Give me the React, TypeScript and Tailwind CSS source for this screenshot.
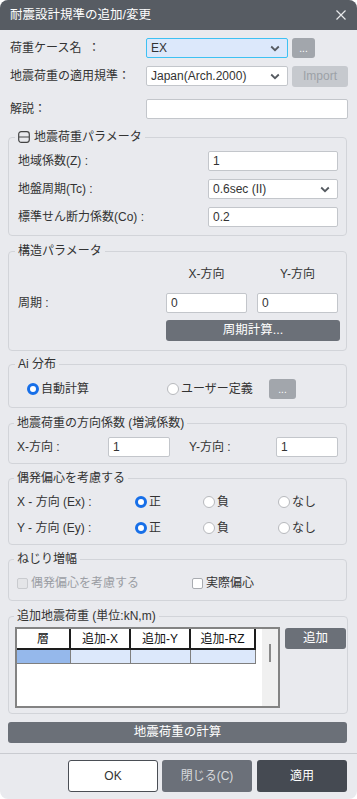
import React from "react";

function Chevron() {
  return (
    <svg width="10" height="7" viewBox="0 0 10 7" className="shrink-0">
      <path d="M1.2 1.5L5 5.2l3.8-3.7" fill="none" stroke="#555a60" strokeWidth="1.8" />
    </svg>
  );
}

function Select({ value, focus, className = "" }: { value: string; focus?: boolean; className?: string }) {
  return (
    <div
      className={`flex h-[20px] items-center justify-between rounded-[2px] border pl-[4px] pr-[7px] ${
        focus ? "border-[#3ec1f3] bg-[#dce8fb]" : "border-[#c3c6cb] bg-white"
      } ${className}`}
    >
      <span>{value}</span>
      <Chevron />
    </div>
  );
}

function Input({ value = "", className = "" }: { value?: string; className?: string }) {
  return (
    <div className={`flex h-[20px] items-center rounded-[2px] border border-[#c3c6cb] bg-white pl-[4px] ${className}`}>
      {value}
    </div>
  );
}

function Radio({ on, label, className = "" }: { on?: boolean; label: string; className?: string }) {
  return (
    <div className={`flex items-center gap-[2px] ${className}`}>
      <span
        className={
          on
            ? "h-[12px] w-[12px] rounded-full border-[3.5px] border-[#176fe8] bg-white"
            : "h-[12px] w-[12px] rounded-full border border-[#b7b9bd] bg-white"
        }
      />
      <span>{label}</span>
    </div>
  );
}

function Check({ label, disabled, className = "" }: { label: string; disabled?: boolean; className?: string }) {
  return (
    <div className={`flex items-center gap-[3px] ${disabled ? "text-[#9b9ea4]" : ""} ${className}`}>
      <span
        className={`h-[11px] w-[11px] rounded-[2px] border ${
          disabled ? "border-[#c9cbcf] bg-[#e4e5e8]" : "border-[#a9acb1] bg-white"
        }`}
      />
      <span>{label}</span>
    </div>
  );
}

function Group({
  title,
  children,
  className = "",
}: {
  title: React.ReactNode;
  children: React.ReactNode;
  className?: string;
}) {
  return (
    <fieldset className={`rounded-[4px] border border-[#d2d4d9] ${className}`}>
      <legend className="-ml-[3px] px-[3px] text-[12px] leading-[18px]">{title}</legend>
      {children}
    </fieldset>
  );
}

export default function App() {
  return (
    <div className="h-[799px] w-[357px] bg-white font-['Liberation_Sans','Noto_Sans_CJK_JP',sans-serif] text-[12px] text-[#333]">
      <div className="flex h-full flex-col overflow-hidden rounded-[8px] bg-[#e9eaee]">
        {/* title */}
        <div className="flex h-[30px] shrink-0 items-center justify-between bg-[#575c63] pl-[10px] pr-[11px] text-white">
          <span className="text-[12.5px]">耐震設計規準の追加/変更</span>
          <svg width="10" height="10" viewBox="0 0 10 10">
            <path d="M0.5 0.5l9 9M9.5 0.5l-9 9" stroke="#e8e9eb" strokeWidth="1.2" />
          </svg>
        </div>

        {/* top rows */}
        <div className="flex flex-col pl-[10px] pr-[9px] pt-[8px]">
          <div className="flex h-[20px] items-center">
            <span className="w-[136px]">荷重ケース名&nbsp;&nbsp;：</span>
            <Select value="EX" focus className="w-[142px]" />
            <div className="ml-[4px] flex h-[20px] w-[23px] items-center justify-center rounded-[3px] bg-[#a2a6ac] text-[10px] text-white">
              ...
            </div>
          </div>
          <div className="mt-[8px] flex h-[20px] items-center">
            <span className="w-[136px]">地震荷重の適用規準：</span>
            <Select value="Japan(Arch.2000)" className="w-[142px]" />
            <div className="ml-[4px] flex h-[21px] w-[56px] items-center justify-center rounded-[3px] bg-[#c6c9ce] text-[#9ca1a7]">
              Import
            </div>
          </div>
          <div className="mt-[13px] flex h-[20px] items-center">
            <span className="w-[136px]">解説：</span>
            <Input className="w-[202px]" />
          </div>
        </div>

        <div className="flex flex-col pl-[8px] pr-[10px]">
          {/* 地震荷重パラメータ */}
          <Group
            className="mt-[9px] pb-[8px] pl-[9px] pr-[8px] pt-[5px]"
            title={
              <span className="flex items-center gap-[4px]">
                <svg width="12" height="12" viewBox="0 0 12 12">
                  <rect x="0.7" y="0.7" width="10.6" height="10.6" rx="2.5" fill="none" stroke="#444" strokeWidth="1.2" />
                  <path d="M1 6h10" stroke="#444" strokeWidth="1.2" />
                </svg>
                地震荷重パラメータ
              </span>
            }
          >
            <div className="flex flex-col gap-[8px]">
              <div className="flex h-[20px] items-center justify-between">
                <span>地域係数(Z) :</span>
                <Input value="1" className="w-[130px]" />
              </div>
              <div className="flex h-[20px] items-center justify-between">
                <span>地盤周期(Tc) :</span>
                <Select value="0.6sec (II)" className="w-[130px]" />
              </div>
              <div className="flex h-[20px] items-center justify-between">
                <span>標準せん断力係数(Co) :</span>
                <Input value="0.2" className="w-[130px]" />
              </div>
            </div>
          </Group>

          {/* 構造パラメータ */}
          <Group className="mt-[6px] pb-[9px] pl-[9px] pr-[8px] pt-[6px]" title="構造パラメータ">
            <div className="grid grid-cols-[138px_81px_81px] gap-x-[10px]">
              <span />
              <span className="h-[16px] text-center leading-[16px]">X-方向</span>
              <span className="h-[16px] text-center leading-[16px]">Y-方向</span>
              <span className="mt-[11px] flex h-[20px] items-center">周期 :</span>
              <Input value="0" className="mt-[11px]" />
              <Input value="0" className="mt-[11px]" />
              <span />
              <div className="col-span-2 mt-[7px] flex h-[21px] w-[174px] items-center justify-center rounded-[3px] bg-[#6b7078] text-[12.5px] text-white">
                周期計算...
              </div>
            </div>
          </Group>

          {/* Ai 分布 */}
          <Group className="mt-[4px] pb-[8px] pl-[9px] pr-[8px] pt-[6px]" title="Ai 分布">
            <div className="flex h-[20px] items-center pl-[9px]">
              <Radio on label="自動計算" className="w-[140px]" />
              <Radio label="ユーザー定義" className="w-[102px]" />
              <div className="flex h-[20px] w-[27px] items-center justify-center rounded-[3px] bg-[#a2a6ac] text-[10px] text-white">
                ...
              </div>
            </div>
          </Group>

          {/* 地震荷重の方向係数 */}
          <Group className="mt-[6px] pb-[6px] pl-[8px] pr-[8px] pt-[5px]" title="地震荷重の方向係数 (増減係数)">
            <div className="flex h-[20px] items-center">
              <span className="w-[91px]">X-方向 :</span>
              <Input value="1" className="w-[62px]" />
              <span className="ml-[19px] w-[87px]">Y-方向 :</span>
              <Input value="1" className="w-[62px]" />
            </div>
          </Group>

          {/* 偶発偏心を考慮する */}
          <Group className="mt-[5px] pb-[6px] pl-[8px] pr-[8px] pt-[5px]" title="偶発偏心を考慮する">
            <div className="flex flex-col gap-[6px]">
              <div className="grid h-[20px] grid-cols-[118px_68px_75px_1fr] items-center">
                <span>X - 方向 (Ex) :</span>
                <Radio on label="正" />
                <Radio label="負" />
                <Radio label="なし" />
              </div>
              <div className="grid h-[20px] grid-cols-[118px_68px_75px_1fr] items-center">
                <span>Y - 方向 (Ey) :</span>
                <Radio on label="正" />
                <Radio label="負" />
                <Radio label="なし" />
              </div>
            </div>
          </Group>

          {/* ねじり増幅 */}
          <Group className="mt-[5px] pb-[7px] pl-[8px] pr-[8px] pt-[5px]" title="ねじり増幅">
            <div className="flex h-[20px] items-center">
              <Check disabled label="偶発偏心を考慮する" className="w-[175px]" />
              <Check label="実際偏心" />
            </div>
          </Group>

          {/* 追加地震荷重 */}
          <Group className="mt-[6px] pb-[5px] pl-[8px] pr-[1px] pt-[2px]" title="追加地震荷重 (単位:kN,m)">
            <div className="-ml-[2px] flex items-start">
              <div className="flex h-[81px] w-[265px] border-2 border-[#838383] bg-white">
                <div className="flex w-[246px] flex-col">
                  <div className="flex h-[21px] text-[#111]">
                    <div className="flex w-[54px] items-center justify-center border-b-2 border-r-2 border-[#1d1d1d]">層</div>
                    <div className="flex w-[60px] items-center justify-center border-b-2 border-r-2 border-[#1d1d1d]">追加-X</div>
                    <div className="flex w-[60px] items-center justify-center border-b-2 border-r-2 border-[#1d1d1d]">追加-Y</div>
                    <div className="flex w-[65px] items-center justify-center border-b-2 border-r-2 border-[#1d1d1d]">追加-RZ</div>
                  </div>
                  <div className="flex h-[14px]">
                    <div className="w-[54px] border-b border-r border-[#7f7f7f] bg-[#95b8eb]" />
                    <div className="w-[60px] border-b border-r border-[#7f7f7f] bg-[#dce8fb]" />
                    <div className="w-[60px] border-b border-r border-[#7f7f7f] bg-[#dce8fb]" />
                    <div className="w-[65px] border-b border-r border-[#7f7f7f] bg-[#dce8fb]" />
                  </div>
                </div>
                <div className="ml-auto flex w-[16px] justify-center bg-[#f0f0f0] pt-[15px]">
                  <div className="h-[18px] w-[2px] bg-[#8a8a8a]" />
                </div>
              </div>
              <div className="ml-[5px] mt-[1px] flex h-[21px] w-[61px] items-center justify-center rounded-[3px] bg-[#6b7078] text-[12.5px] text-white">
                追加
              </div>
            </div>
          </Group>

          <div className="mt-[8px] flex h-[21px] items-center justify-center rounded-[3px] bg-[#6b7078] text-[12.5px] text-white">
            地震荷重の計算
          </div>
        </div>

        {/* footer */}
        <div className="mt-[10px] flex justify-end gap-[4px] border-t border-[#c9cbd0] pr-[10px] pt-[6px]">
          <div className="flex h-[32px] w-[90px] items-center justify-center rounded-[3px] border border-[#4a4e55] bg-white">
            OK
          </div>
          <div className="flex h-[32px] w-[90px] items-center justify-center rounded-[3px] bg-[#6b7079] text-[#d7d9dc]">
            閉じる(C)
          </div>
          <div className="ml-[1px] flex h-[32px] w-[90px] items-center justify-center rounded-[3px] bg-[#454a52] text-white">
            適用
          </div>
        </div>
      </div>
    </div>
  );
}
